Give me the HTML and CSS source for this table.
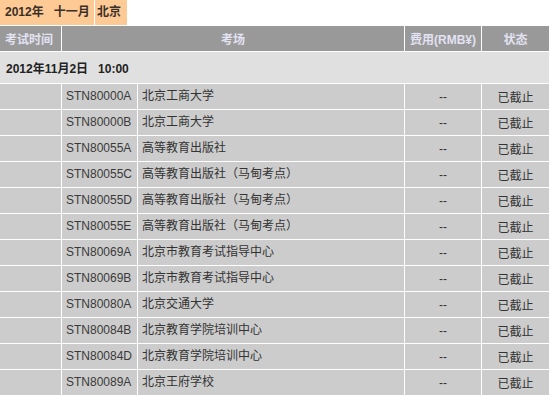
FILE: index.html
```html
<!DOCTYPE html>
<html lang="zh">
<head>
<meta charset="utf-8">
<title>考试安排</title>
<link rel="stylesheet" href="styles.css">
</head>
<body>
<div class="tabs">
  <div class="tab tab-month">2012年&nbsp;&nbsp; 十一月</div>
  <div class="tab tab-city">北京</div>
</div>
<table class="exam">
  <colgroup>
    <col class="c1"><col class="c2"><col class="c3"><col class="c4">
  </colgroup>
  <thead>
    <tr class="head">
      <th class="left">考试时间</th>
      <th>考场</th>
      <th>费用(RMB¥)</th>
      <th>状态</th>
    </tr>
  </thead>
  <tbody>
    <tr class="date"><td colspan="4">2012年11月2日&nbsp;&nbsp; 10:00</td></tr>
    <tr><td></td><td><span class="code">STN80000A</span>北京工商大学</td><td class="mid">--</td><td class="mid">已截止</td></tr>
    <tr><td></td><td><span class="code">STN80000B</span>北京工商大学</td><td class="mid">--</td><td class="mid">已截止</td></tr>
    <tr><td></td><td><span class="code">STN80055A</span>高等教育出版社</td><td class="mid">--</td><td class="mid">已截止</td></tr>
    <tr><td></td><td><span class="code">STN80055C</span>高等教育出版社（马甸考点）</td><td class="mid">--</td><td class="mid">已截止</td></tr>
    <tr><td></td><td><span class="code">STN80055D</span>高等教育出版社（马甸考点）</td><td class="mid">--</td><td class="mid">已截止</td></tr>
    <tr><td></td><td><span class="code">STN80055E</span>高等教育出版社（马甸考点）</td><td class="mid">--</td><td class="mid">已截止</td></tr>
    <tr><td></td><td><span class="code">STN80069A</span>北京市教育考试指导中心</td><td class="mid">--</td><td class="mid">已截止</td></tr>
    <tr><td></td><td><span class="code">STN80069B</span>北京市教育考试指导中心</td><td class="mid">--</td><td class="mid">已截止</td></tr>
    <tr><td></td><td><span class="code">STN80080A</span>北京交通大学</td><td class="mid">--</td><td class="mid">已截止</td></tr>
    <tr><td></td><td><span class="code">STN80084B</span>北京教育学院培训中心</td><td class="mid">--</td><td class="mid">已截止</td></tr>
    <tr><td></td><td><span class="code">STN80084D</span>北京教育学院培训中心</td><td class="mid">--</td><td class="mid">已截止</td></tr>
    <tr><td></td><td><span class="code">STN80089A</span>北京王府学校</td><td class="mid">--</td><td class="mid">已截止</td></tr>
  </tbody>
</table>
</body>
</html>
```

FILE: styles.css
```css
html, body {
  margin: 0;
  padding: 0;
  background: #ffffff;
}
body {
  font-family: "Liberation Sans", Arial, "Noto Sans CJK SC", sans-serif;
  font-size: 12px;
  color: #333333;
  width: 550px;
}
.tabs {
  display: flex;
  gap: 1px;
  height: 25px;
  margin-bottom: 1px;
}
.tab {
  background: #fdc995;
  font-weight: bold;
  color: #3a3028;
  line-height: 25px;
  height: 25px;
  box-sizing: border-box;
}
.tab-month {
  width: 94px;
  padding-left: 5px;
}
.tab-city {
  width: 32px;
  padding-left: 2px;
}
.exam {
  width: 550px;
  border-collapse: separate;
  border-spacing: 0;
  table-layout: fixed;
}
.c1 { width: 62px; }
.c2 { width: 343px; }
.c3 { width: 77px; }
.c4 { width: 68px; }
.exam th,
.exam td {
  box-sizing: border-box;
  border-right: 1px solid #ffffff;
  border-bottom: 1px solid #ffffff;
  padding: 0;
  white-space: nowrap;
  overflow: hidden;
}
.head th {
  background: #999999;
  color: #e2e2f2;
  font-weight: bold;
  height: 26px;
  text-align: center;
}
.head th.left {
  text-align: left;
  padding-left: 5px;
}
.date td {
  background: #e0e0e0;
  font-weight: bold;
  color: #222222;
  height: 32px;
  padding-left: 6px;
}
tbody tr td {
  background: #cccccc;
  height: 26px;
}
.code {
  display: inline-block;
  width: 76px;
  padding-left: 4px;
  box-sizing: border-box;
  border-right: 1px solid #ffffff;
  margin-right: 4px;
  line-height: 25px;
  color: #3a3a3a;
}
.mid {
  text-align: center;
}
```
